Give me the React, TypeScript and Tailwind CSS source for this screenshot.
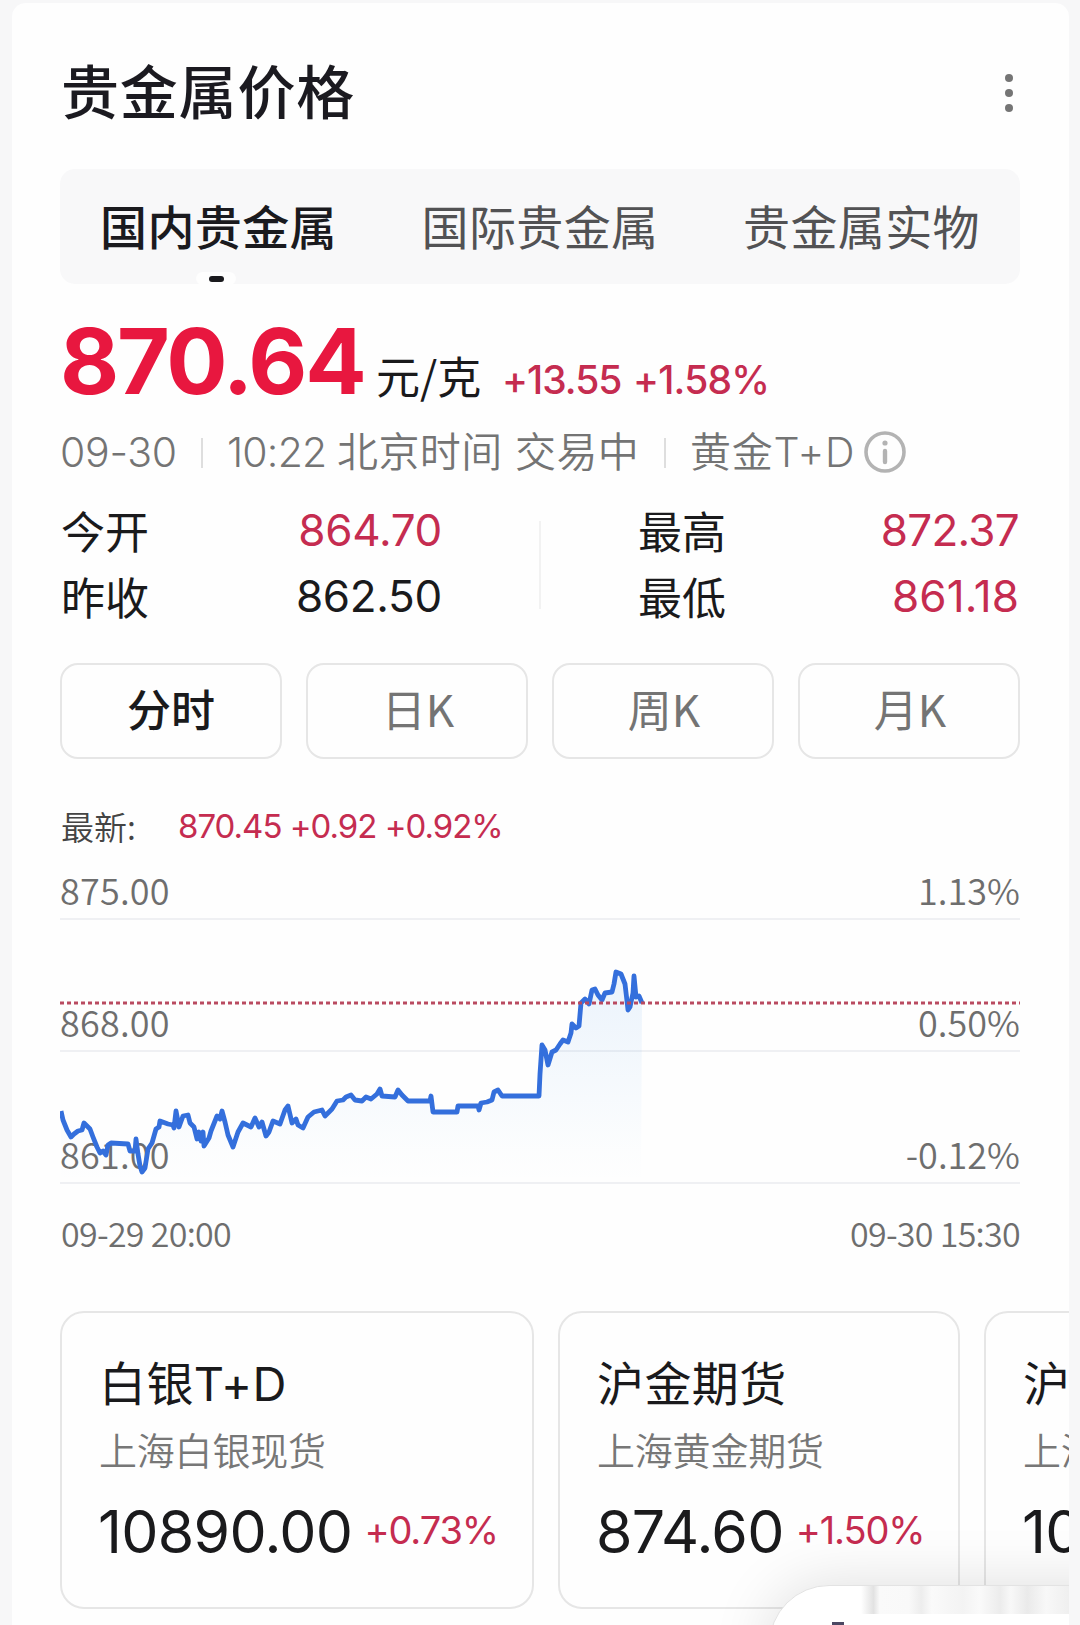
import { useState } from "react";

const CJK = "font-['Noto_Sans_CJK_SC',sans-serif]";
const NUM = "font-['Inter','Noto_Sans_CJK_SC',sans-serif]";

const tabs = ["国内贵金属", "国际贵金属", "贵金属实物"];
const periods = ["分时", "日K", "周K", "月K"];

const linePoints =
  "61,1111 63,1120 67,1130 71,1137 74,1134 78,1131 82,1130 84,1123 87,1126 90,1129 93,1137 97,1147 100,1153 103,1151 106,1155 108,1145 111,1143 128,1144 130,1151 135,1151 136,1139 138,1154 140,1166 142,1172 145,1168 148,1149 152,1143 156,1129 159,1127 160,1121 168,1124 173,1125 174,1128 176,1111 179,1127 183,1116 188,1115 190,1123 194,1127 197,1139 199,1132 201,1141 203,1132 204,1146 209,1138 211,1131 217,1116 220,1119 222,1111 225,1122 228,1135 233,1147 238,1132 243,1123 251,1127 255,1118 259,1127 262,1122 266,1136 269,1132 273,1121 280,1124 285,1110 288,1106 292,1123 296,1119 298,1125 303,1128 308,1117 314,1112 322,1110 325,1116 332,1109 337,1101 343,1100 346,1097 351,1095 355,1100 362,1101 366,1097 371,1099 377,1094 380,1089 382,1096 395,1097 398,1090 402,1095 408,1101 430,1101 431,1096 433,1112 457,1112 458,1106 478,1106 479,1110 481,1103 487,1102 492,1100 494,1092 498,1090 502,1096 539,1096 540,1074 542,1045 545,1050 548,1065 552,1052 556,1050 560,1044 563,1040 568,1042 571,1033 572,1024 576,1028 579,1026 581,1003 585,999 589,1004 592,990 595,989 598,995 602,1000 605,993 612,992 614,984 616,972 621,974 625,984 627,1001 628,1010 630,1007 633,993 634,976 636,997 639,996 642,1003";

const gridRows = [
  { price: "875.00", pct: "1.13%" },
  { price: "868.00", pct: "0.50%" },
  { price: "861.00", pct: "-0.12%" },
];

function Header() {
  return (
    <header className="flex h-[177px] items-center justify-between px-[49px] pb-[2px]">
      <h1 className="pb-[4px] text-[58px] font-medium leading-none tracking-[0.8px] text-[#1b1a20]">
        贵金属价格
      </h1>
      <button type="button" className="mt-[4px] mr-[7px] flex flex-col gap-[7px]">
        <i className="size-2 rounded-full bg-[#757575]" />
        <i className="size-2 rounded-full bg-[#757575]" />
        <i className="size-2 rounded-full bg-[#757575]" />
      </button>
    </header>
  );
}

function Chart() {
  return (
    <div className="relative mt-[9px] text-[36px] font-[350] text-[#6e6e6e]">
      {gridRows.map((row) => (
        <div
          key={row.price}
          className="flex h-[132px] items-end justify-between border-b-2 border-[#eff0f3] pb-[9px] leading-[40px] first:h-[60px]"
        >
          <span className="tracking-[0.2px]">{row.price}</span>
          <span>{row.pct}</span>
        </div>
      ))}
      <svg
        viewBox="60 860 960 324"
        className="absolute inset-0 h-[324px] w-[960px]"
        fill="none"
      >
        <defs>
          <linearGradient id="area" x1="0" y1="970" x2="0" y2="1183" gradientUnits="userSpaceOnUse">
            <stop offset="0" stopColor="#3b8fe6" stopOpacity="0.1" />
            <stop offset="0.85" stopColor="#3b8fe6" stopOpacity="0.01" />
            <stop offset="1" stopColor="#3b8fe6" stopOpacity="0" />
          </linearGradient>
        </defs>
        <polygon points={`61,1183 ${linePoints} 641,1183`} fill="url(#area)" />
        <polyline points={linePoints} stroke="#346fdc" strokeWidth="4.8" strokeLinejoin="round" />
        <path d="M60 1003H1020" stroke="#b94a60" strokeWidth="3" strokeDasharray="4 3" />
      </svg>
    </div>
  );
}

interface QuoteProps {
  name: string;
  desc: string;
  price: string;
  change: string;
  className: string;
}

function QuoteCard({ name, desc, price, change, className }: QuoteProps) {
  return (
    <div
      className={`h-[298px] shrink-0 whitespace-nowrap rounded-[24px] border-2 border-[#e6e6e6] pl-[37px] pt-[44px] ${className}`}
    >
      <div className={`h-[54px] text-[47px] font-[370] leading-[54px] tracking-[0.4px] text-[#1a1a1c] ${NUM}`}>
        {name}
      </div>
      <div className="mt-[16px] h-[44px] text-[38px] font-[350] leading-[44px] tracking-[-0.2px] text-[#777]">
        {desc}
      </div>
      <div className={`-ml-px mt-[23px] flex items-center leading-[72px] ${NUM}`}>
        <span className="text-[59px] font-[380] tracking-[-0.7px] text-[#1a1a1c]">{price}</span>
        <span className="ml-[12px] pb-[3px] text-[38px] font-[380] tracking-[-1.1px] text-[#c52c50]">{change}</span>
      </div>
    </div>
  );
}

// floating button that peeks in from the bottom edge
function FloatingPill() {
  return (
    <div className="absolute right-[11px] bottom-0 h-[170px] w-[430px] overflow-hidden">
      <div className="absolute top-[130px] left-[130px] h-[120px] w-[420px] rounded-[60px] border border-[#e3e3e3] bg-white shadow-[0_0_60px_rgba(0,0,0,0.13)]" />
      <div className="absolute top-[131px] left-[222px] h-[28px] w-[208px] bg-[linear-gradient(90deg,#fff0_0%,#e2e2e2_6%,#fafafa_9%,#f9f9f9_23%,#ededed_29%,#fafafa_34%,#f3f3f3_49%,#fafafa_57%,#ececec_67%,#f8f8f8_72%,#eaeaea_80%,#f8f8f8_89%,#efefef_100%)]" />
      <div className="absolute top-[159px] left-[225px] h-[30px] w-[160px] rounded-tr-[14px] bg-white" />
      <div className="absolute top-[167px] left-[193px] h-[3px] w-[12px] bg-[#4b4863]" />
    </div>
  );
}

export default function App() {
  const [tab, setTab] = useState(0);
  const [period, setPeriod] = useState(0);

  return (
    <div className={`relative h-[1625px] w-[1080px] overflow-hidden bg-[#f7f7f8] pl-[12px] pt-[3px] ${CJK}`}>
      <div className="h-[1622px] w-[1057px] overflow-hidden rounded-t-[14px] bg-[#fefefe]">
        <Header />

        <div className="mr-[49px] -mt-[11px] ml-[48px] flex h-[115px] justify-between rounded-[15px] bg-[#f8f8f9] pr-[40px] pl-[40px]">
          {tabs.map((t, i) => (
            <button
              key={t}
              type="button"
              onClick={() => setTab(i)}
              className={`relative h-full pb-[4px] text-left text-[47px] leading-none tracking-[0.4px] ${
                i === tab ? "font-medium text-[#1a1a1e]" : "font-[370] text-[#525254]"
              }`}
            >
              {t}
              {i === tab && (
                <span className="absolute bottom-[-1px] left-[96px] flex h-[13px] w-[40px] items-center justify-center rounded-full bg-[#fefefe]">
                  <i className="h-[6px] w-[15px] rounded-full bg-[#1a1a1e]" />
                </span>
              )}
            </button>
          ))}
        </div>

        <section className="mr-[49px] ml-[48px]">
          <div className="mt-[27px] flex h-[100px] items-baseline whitespace-nowrap leading-[100px]">
            <span className={`w-[316px] text-[91px] font-bold tracking-[-2.2px] text-[#e8173f] ${NUM}`}>870.64</span>
            <span className="w-[126px] text-[44px] font-[370] text-[#1a1a1c]">元/克</span>
            <span className={`w-[131px] text-[39px] font-medium tracking-[-1px] text-[#c52c50] ${NUM}`}>+13.55</span>
            <span className={`text-[39px] font-medium tracking-[-0.8px] text-[#c52c50] ${NUM}`}>+1.58%</span>
          </div>

          <div className={`mt-[13px] flex h-[58px] items-center whitespace-nowrap text-[41px] font-[350] text-[#747474] ${NUM}`}>
            <span className="w-[141px] tracking-[-0.3px]">09-30</span>
            <i className="h-[30px] w-[2px] bg-[#dedede]" />
            <span className="ml-[24px] w-[110px] tracking-[-0.8px]">10:22</span>
            <span className="w-[178px] tracking-[0.4px]">北京时间</span>
            <span className="w-[149px] tracking-[0.4px]">交易中</span>
            <i className="h-[30px] w-[2px] bg-[#dedede]" />
            <span className="ml-[24px] w-[174px] tracking-[0.8px]">黄金T+D</span>
            <svg viewBox="0 0 42 42" className="-mt-[2px] size-[42px]" fill="none" stroke="#b3b3b3">
              <circle cx="21" cy="21" r="19" strokeWidth="3.6" />
              <path d="M21 20V31" strokeWidth="4.4" strokeLinecap="round" />
              <circle cx="21" cy="12" r="2.6" fill="#b3b3b3" stroke="none" />
            </svg>
          </div>

          <div className="mt-[15px] flex h-[132px] text-[44px] font-[370] leading-[66px] text-[#1a1a1c]">
            <div className="w-[382px] pl-px">
              <div className="flex justify-between">
                <span>今开</span>
                <span className={`pt-px leading-[65px] tracking-[-0.3px] text-[#c52c50] ${NUM}`}>864.70</span>
              </div>
              <div className="flex justify-between">
                <span>昨收</span>
                <span className={`pt-px leading-[65px] tracking-[-0.3px] ${NUM}`}>862.50</span>
              </div>
            </div>
            <i className="mt-[24px] ml-[97px] h-[88px] w-[2px] bg-[#f2f2f2]" />
            <div className="ml-[97px] flex-1 pr-px">
              <div className="flex justify-between">
                <span>最高</span>
                <span className={`pt-px leading-[65px] tracking-[-0.7px] text-[#c52c50] ${NUM}`}>872.37</span>
              </div>
              <div className="flex justify-between">
                <span>最低</span>
                <span className={`pt-px leading-[65px] tracking-[0.1px] text-[#c52c50] ${NUM}`}>861.18</span>
              </div>
            </div>
          </div>

          <div className="mt-[34px] grid grid-cols-4 gap-6">
            {periods.map((p, i) => (
              <button
                key={p}
                type="button"
                onClick={() => setPeriod(i)}
                className={`h-[96px] rounded-[18px] border-2 border-[#e6e6e6] pb-[6px] text-[44px] leading-none ${
                  i === period ? "font-medium text-[#1a1a1c]" : "pl-[2px] font-[370] text-[#747474]"
                }`}
              >
                {p}
              </button>
            ))}
          </div>

          <div className="mt-[44px] flex h-[48px] items-center whitespace-nowrap text-[33px]">
            <span className="w-[118px] pl-px font-[350] text-[#444]">最新:</span>
            <span className={`font-[380] tracking-[-1px] text-[#c52c50] ${NUM}`}>870.45 +0.92 +0.92%</span>
          </div>

          <Chart />

          <div className="mt-[24px] flex h-[48px] items-center justify-between pl-px text-[34px] font-[350] tracking-[-0.7px] text-[#6e6e6e]">
            <span>09-29 20:00</span>
            <span>09-30 15:30</span>
          </div>
        </section>

        <div className="mt-[55px] ml-[48px] flex gap-[24px]">
          <QuoteCard name="白银T+D" desc="上海白银现货" price="10890.00" change="+0.73%" className="w-[474px]" />
          <QuoteCard name="沪金期货" desc="上海黄金期货" price="874.60" change="+1.50%" className="w-[402px]" />
          <QuoteCard name="沪银期货" desc="上海白银期货" price="10939.00" change="+1.02%" className="w-[474px]" />
        </div>
      </div>
      <FloatingPill />
    </div>
  );
}
